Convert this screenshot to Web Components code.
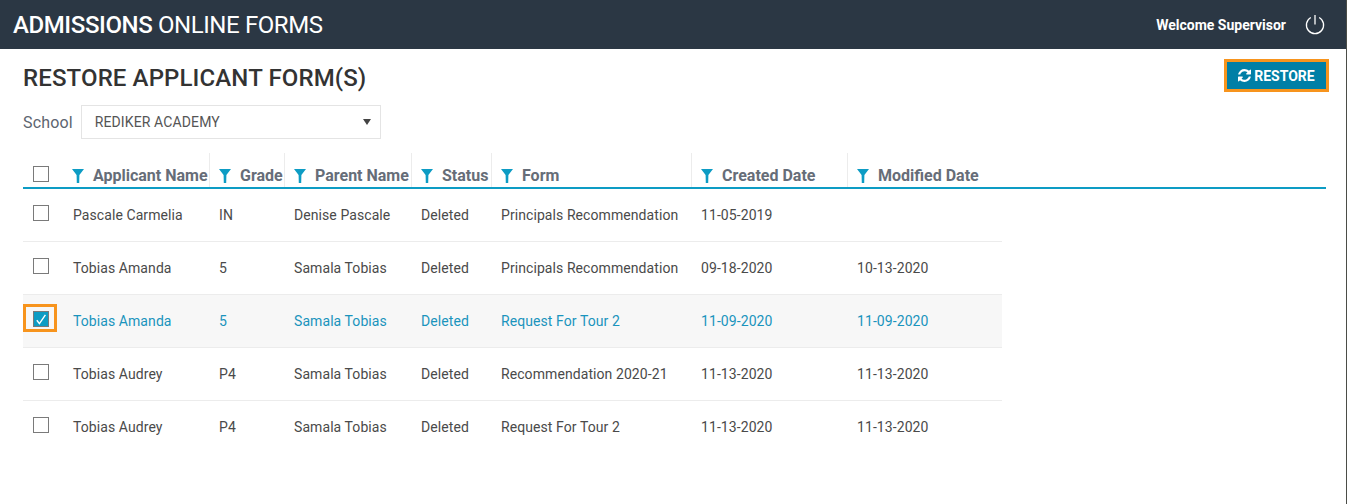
<!DOCTYPE html>
<html lang="en">
<head>
<meta charset="utf-8">
<title>Admissions Online Forms</title>
<style>
  html, body { margin: 0; padding: 0; background: #fff; }
  body {
    box-sizing: border-box;
    height: 504px;
    overflow: hidden;
    border-right: 1px solid #4b4d48;
    font-family: Roboto, "Liberation Sans", sans-serif;
  }
</style>
</head>
<body>
<app-header></app-header>
<restore-page></restore-page>

<script>
const FUNNEL = `<svg width="12" height="14" viewBox="0 0 12 14"><path d="M0 0h12L7.4 6 7.2 14H4.8L4.6 6z" fill="#0d9cc4"/></svg>`;

class AppHeader extends HTMLElement {
  connectedCallback() {
    this.attachShadow({ mode: 'open' });
    this.shadowRoot.innerHTML = `
      <style>
        :host {
          display: flex;
          justify-content: space-between;
          align-items: center;
          height: 49px;
          padding: 0 21px 0 13px;
          background: #2b3744;
          color: #fff;
        }
        .brand { font-size: 24px; font-weight: 400; letter-spacing: -0.4px; }
        .brand b { font-weight: 500; }
        .user { display: flex; align-items: center; gap: 19px; }
        .welcome { font-size: 14px; font-weight: 700; }
        svg { display: block; margin-top: 1px; }
      </style>
      <div class="brand"><b>ADMISSIONS</b> ONLINE FORMS</div>
      <div class="user">
        <span class="welcome">Welcome Supervisor</span>
        <svg width="20" height="20" viewBox="0 0 20 20" fill="none" stroke="#fff" stroke-width="1.3">
          <path d="M5.8 2.5a8.6 8.6 0 1 0 8.4 0"/>
          <path d="M10 0v9.5"/>
        </svg>
      </div>
    `;
  }
}

class RestoreButton extends HTMLElement {
  connectedCallback() {
    this.attachShadow({ mode: 'open' });
    this.shadowRoot.innerHTML = `
      <style>
        :host {
          display: inline-flex;
          align-items: center;
          justify-content: center;
          gap: 3px;
          box-sizing: border-box;
          width: 105px;
          height: 33px;
          background: #007fa6;
          border: 3px solid #f7941d;
          color: #fff;
          font-size: 14px;
          font-weight: 700;
        }
        svg { display: block; }
      </style>
      <svg width="13" height="13" viewBox="0 128 1536 1536" fill="#fff">
        <path d="M1511 1056q0 5-1 7-64 268-268 434.5t-478 166.5q-146 0-282.500-55t-243.500-157l-129 129q-19 19-45 19t-45-19-19-45v-448q0-26 19-45t45-19h448q26 0 45 19t19 45-19 45l-137 137q71 66 161 102t187 36q134 0 250-65t186-179q11-17 53-117 8-23 30-23h192q13 0 22.500 9.500t9.500 22.500zm25-800v448q0 26-19 45t-45 19h-448q-26 0-45-19t-19-45 19-45l138-138q-148-137-349-137-134 0-250 65t-186 179q-11 17-53 117-8 23-30 23h-199q-13 0-22.500-9.500t-9.500-22.500v-7q65-268 270-434.500t480-166.500q146 0 284 55.500t245 156.500l130-129q19-19 45-19t45 19 19 45z"/>
      </svg>
      <span><slot></slot></span>
    `;
  }
}

class SchoolSelect extends HTMLElement {
  connectedCallback() {
    this.attachShadow({ mode: 'open' });
    this.shadowRoot.innerHTML = `
      <style>
        :host { display: flex; align-items: center; gap: 8px; }
        label { font-size: 16px; color: #5d6570; letter-spacing: 0.15px; }
        .box {
          box-sizing: border-box;
          display: flex;
          align-items: center;
          justify-content: space-between;
          width: 300px;
          height: 34px;
          padding: 0 9px 0 13px;
          border: 1px solid #e4e4e4;
          font-size: 14px;
          letter-spacing: 0.12px;
          color: #555;
        }
        .caret {
          width: 0; height: 0;
          border-left: 4px solid transparent;
          border-right: 4px solid transparent;
          border-top: 6px solid #444;
        }
      </style>
      <label>School</label>
      <div class="box"><slot></slot><span class="caret"></span></div>
    `;
  }
}

class CheckMark extends HTMLElement {
  connectedCallback() {
    const checked = this.hasAttribute('checked');
    this.attachShadow({ mode: 'open' });
    this.shadowRoot.innerHTML = `
      <style>
        :host {
          display: block;
          box-sizing: border-box;
          width: 16px;
          height: 16px;
          border: 1px solid #7a7a7a;
          background: ${checked ? '#0d9cc4' : '#fff'};
        }
        svg { display: block; }
      </style>
      ${checked ? `<svg width="14" height="14" viewBox="0 0 14 14" fill="none" stroke="#fff" stroke-width="1.4"><path d="M2.8 8.2l2.6 3.4 6-8.800"/></svg>` : ''}
    `;
  }
}

class FormsHead extends HTMLElement {
  connectedCallback() {
    const labels = ['Applicant Name', 'Grade', 'Parent Name', 'Status', 'Form', 'Created Date', 'Modified Date'];
    this.attachShadow({ mode: 'open' });
    this.shadowRoot.innerHTML = `
      <style>
        :host {
          display: grid;
          grid-template-columns: var(--cols);
          height: 34px;
          border-bottom: 2px solid #0d9cc4;
          color: #666d78;
          font-size: 16px;
          font-weight: 700;
        }
        .box { display: flex; align-items: flex-end; padding: 0 0 2px 2px; }
        .box check-mark { margin-bottom: 3px; margin-left: 8px; }
        .cell {
          display: flex;
          align-items: flex-end;
          gap: 9px;
          padding: 0 0 2px 9px;
          border-left: 1px solid #ececec;
          white-space: nowrap;
          line-height: 19px;
        }
        .cell.first { border-left: 0; }
        .cell svg { display: block; margin-bottom: 2px; flex: none; }
      </style>
      <div class="box"><check-mark></check-mark></div>
      ${labels.map((l, i) => `<div class="cell ${i === 0 ? 'first' : ''}">${FUNNEL}<span>${l}</span></div>`).join('')}
    `;
  }
}

class FormRow extends HTMLElement {
  connectedCallback() {
    const values = JSON.parse(this.dataset.values);
    const selected = this.hasAttribute('selected');
    this.attachShadow({ mode: 'open' });
    this.shadowRoot.innerHTML = `
      <style>
        :host {
          display: grid;
          grid-template-columns: var(--cols);
          align-items: center;
          height: 53px;
          box-sizing: border-box;
          padding-bottom: 1px;
          border-bottom: 1px solid #ececec;
          font-size: 14px;
          letter-spacing: 0.08px;
          color: ${selected ? '#1a94bd' : '#4a4a4a'};
          background: ${selected ? '#f7f7f7' : 'transparent'};
        }
        :host(:last-child) { border-bottom-color: transparent; }
        .box { position: relative; padding: 0 0 3px 10px; }
        .box.focus::before {
          content: '';
          position: absolute;
          left: 0; top: -7px;
          width: 34px; height: 28px;
          box-sizing: border-box;
          border: 3px solid #f7941d;
        }
        .box check-mark { position: relative; }
        .cell { padding-left: 10px; white-space: nowrap; }
      </style>
      <div class="box ${selected ? 'focus' : ''}"><check-mark ${selected ? 'checked' : ''}></check-mark></div>
      ${values.map(v => `<div class="cell">${v}</div>`).join('')}
    `;
  }
}

class RestorePage extends HTMLElement {
  connectedCallback() {
    const rows = [
      ['Pascale Carmelia', 'IN', 'Denise Pascale', 'Deleted', 'Principals Recommendation', '11-05-2019', ''],
      ['Tobias Amanda', '5', 'Samala Tobias', 'Deleted', 'Principals Recommendation', '09-18-2020', '10-13-2020'],
      ['Tobias Amanda', '5', 'Samala Tobias', 'Deleted', 'Request For Tour 2', '11-09-2020', '11-09-2020'],
      ['Tobias Audrey', 'P4', 'Samala Tobias', 'Deleted', 'Recommendation 2020-21', '11-13-2020', '11-13-2020'],
      ['Tobias Audrey', 'P4', 'Samala Tobias', 'Deleted', 'Request For Tour 2', '11-13-2020', '11-13-2020']
    ];
    this.attachShadow({ mode: 'open' });
    this.shadowRoot.innerHTML = `
      <style>
        :host {
          display: block;
          padding: 10px 20px 0 23px;
          --cols: 40px 146px 75px 127px 80px 200px 156px 155px;
        }
        .top { display: flex; justify-content: space-between; align-items: flex-start; }
        h1 { margin: 0; padding-top: 5px; font-size: 24px; line-height: 28px; font-weight: 500; letter-spacing: 0.12px; color: #333; }
        restore-button { margin-right: -3px; }
        school-select { margin-top: 13px; }
        forms-head { margin-top: 14px; }
        .rows { width: 979px; }
      </style>
      <div class="top">
        <h1>RESTORE APPLICANT FORM(S)</h1>
        <restore-button>RESTORE</restore-button>
      </div>
      <school-select>REDIKER ACADEMY</school-select>
      <forms-head></forms-head>
      <div class="rows">
        ${rows.map((r, i) => `<form-row ${i === 2 ? 'selected' : ''} data-values='${JSON.stringify(r)}'></form-row>`).join('')}
      </div>
    `;
  }
}

customElements.define('check-mark', CheckMark);
customElements.define('app-header', AppHeader);
customElements.define('restore-button', RestoreButton);
customElements.define('school-select', SchoolSelect);
customElements.define('forms-head', FormsHead);
customElements.define('form-row', FormRow);
customElements.define('restore-page', RestorePage);
</script>
</body>
</html>
